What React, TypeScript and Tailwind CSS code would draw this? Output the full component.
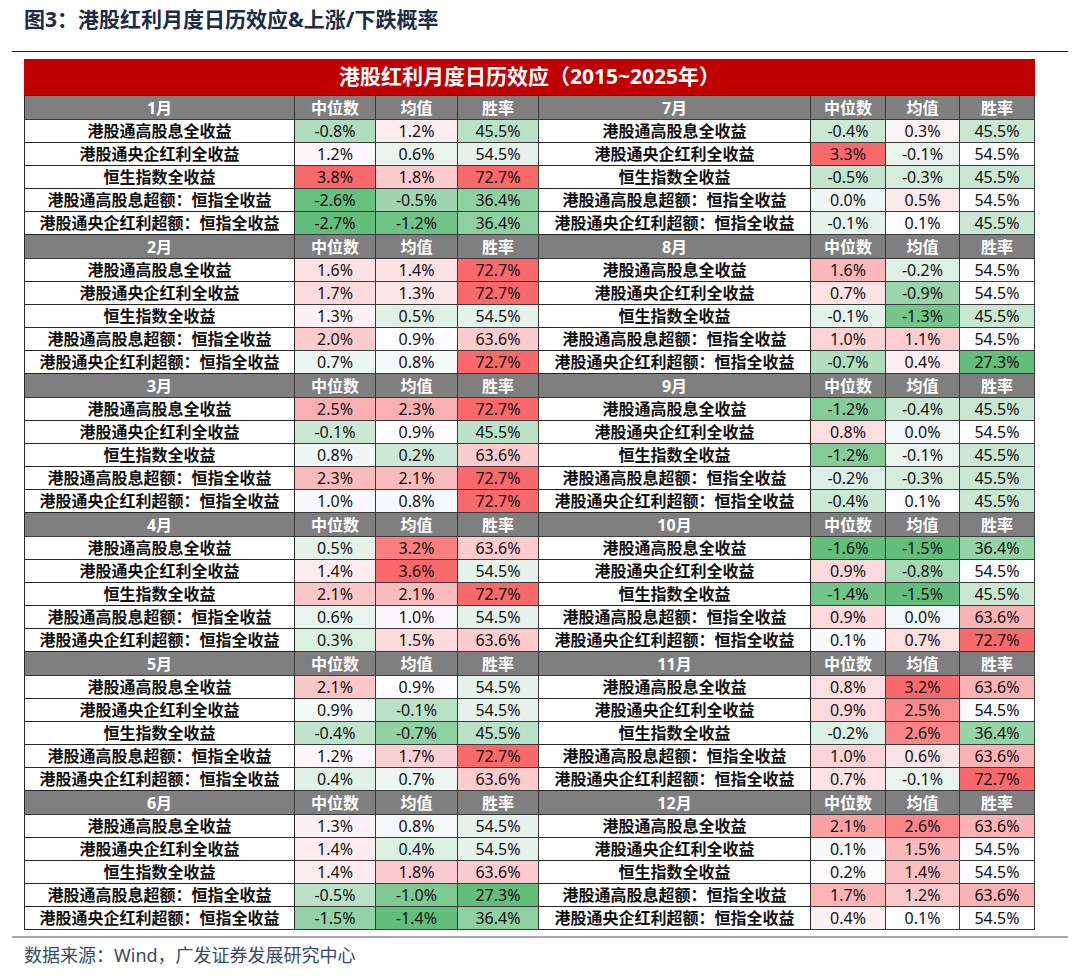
import React from 'react';

type Row = [number, number, number];

interface Block {
  month: string;
  rows: Row[];
}

const LABELS = [
  '港股通高股息全收益',
  '港股通央企红利全收益',
  '恒生指数全收益',
  '港股通高股息超额：恒指全收益',
  '港股通央企红利超额：恒指全收益',
];

const LEFT: Block[] = [
  { month: '1月', rows: [[-0.8, 1.2, 45.5], [1.2, 0.6, 54.5], [3.8, 1.8, 72.7], [-2.6, -0.5, 36.4], [-2.7, -1.2, 36.4]] },
  { month: '2月', rows: [[1.6, 1.4, 72.7], [1.7, 1.3, 72.7], [1.3, 0.5, 54.5], [2.0, 0.9, 63.6], [0.7, 0.8, 72.7]] },
  { month: '3月', rows: [[2.5, 2.3, 72.7], [-0.1, 0.9, 45.5], [0.8, 0.2, 63.6], [2.3, 2.1, 72.7], [1.0, 0.8, 72.7]] },
  { month: '4月', rows: [[0.5, 3.2, 63.6], [1.4, 3.6, 54.5], [2.1, 2.1, 72.7], [0.6, 1.0, 54.5], [0.3, 1.5, 63.6]] },
  { month: '5月', rows: [[2.1, 0.9, 54.5], [0.9, -0.1, 54.5], [-0.4, -0.7, 45.5], [1.2, 1.7, 72.7], [0.4, 0.7, 63.6]] },
  { month: '6月', rows: [[1.3, 0.8, 54.5], [1.4, 0.4, 54.5], [1.4, 1.8, 63.6], [-0.5, -1.0, 27.3], [-1.5, -1.4, 36.4]] },
];

const RIGHT: Block[] = [
  { month: '7月', rows: [[-0.4, 0.3, 45.5], [3.3, -0.1, 54.5], [-0.5, -0.3, 45.5], [0.0, 0.5, 54.5], [-0.1, 0.1, 45.5]] },
  { month: '8月', rows: [[1.6, -0.2, 54.5], [0.7, -0.9, 54.5], [-0.1, -1.3, 45.5], [1.0, 1.1, 54.5], [-0.7, 0.4, 27.3]] },
  { month: '9月', rows: [[-1.2, -0.4, 45.5], [0.8, 0.0, 54.5], [-1.2, -0.1, 45.5], [-0.2, -0.3, 45.5], [-0.4, 0.1, 45.5]] },
  { month: '10月', rows: [[-1.6, -1.5, 36.4], [0.9, -0.8, 54.5], [-1.4, -1.5, 45.5], [0.9, 0.0, 63.6], [0.1, 0.7, 72.7]] },
  { month: '11月', rows: [[0.8, 3.2, 63.6], [0.9, 2.5, 54.5], [-0.2, 2.6, 36.4], [1.0, 0.6, 63.6], [0.7, -0.1, 72.7]] },
  { month: '12月', rows: [[2.1, 2.6, 63.6], [0.1, 1.5, 54.5], [0.2, 1.4, 54.5], [1.7, 1.2, 63.6], [0.4, 0.1, 54.5]] },
];

const HEADS = ['中位数', '均值', '胜率'];

// excel style 3-colour scale: green (min) -> white (median) -> red (max)
const LOW = [0x63, 0xbe, 0x7b];
const MID = [0xfc, 0xfc, 0xff];
const HIGH = [0xf8, 0x69, 0x6b];

function mix(a: number[], b: number[], t: number) {
  const c = a.map((v, i) => Math.round(v + (b[i] - v) * t));
  return `rgb(${c[0]}, ${c[1]}, ${c[2]})`;
}

function makeScale(values: number[]) {
  const s = [...values].sort((a, b) => a - b);
  const min = s[0];
  const max = s[s.length - 1];
  const pos = (s.length - 1) / 2;
  const mid = s[Math.floor(pos)] + (s[Math.ceil(pos)] - s[Math.floor(pos)]) * (pos - Math.floor(pos));
  return (v: number) => {
    if (v >= mid) return mix(MID, HIGH, max === mid ? 0 : (v - mid) / (max - mid));
    return mix(MID, LOW, mid === min ? 0 : (mid - v) / (mid - min));
  };
}

function Side({ blocks, widths }: { blocks: Block[]; widths: string[] }) {
  const scales = [0, 1, 2].map((c) => makeScale(blocks.flatMap((b) => b.rows.map((r) => r[c]))));
  return (
    <div className="flex flex-col">
      {blocks.map((b) => (
        <div key={b.month} className="flex flex-col">
          <div className="flex h-[24px] bg-[#7f7f7f] text-white font-bold text-[16px]">
            <div className={`${widths[0]} flex items-center justify-center border-r border-b border-[#3a3a3a]`}>{b.month}</div>
            {HEADS.map((h, i) => (
              <div key={h} className={`${widths[i + 1]} flex items-center justify-center border-r border-b border-[#3a3a3a]`}>
                {h}
              </div>
            ))}
          </div>
          {b.rows.map((r, ri) => (
            <div key={ri} className="flex h-[23px] text-[16px] text-[#111]">
              <div className={`${widths[0]} flex items-center justify-center bg-white font-bold border-r border-b border-[#262626]`}>
                {LABELS[ri]}
              </div>
              {r.map((v, ci) => (
                <div
                  key={ci}
                  className={`${widths[ci + 1]} flex items-center justify-center border-r border-b border-[#3a3a3a]`}
                  style={{ background: scales[ci](v) }}
                >
                  {v.toFixed(1)}%
                </div>
              ))}
            </div>
          ))}
        </div>
      ))}
    </div>
  );
}

export default function App() {
  return (
    <div className="w-[1080px] h-[976px] bg-white overflow-hidden font-['Noto_Sans','Noto_Sans_CJK_SC',sans-serif]">
      <div className="h-[51px] pl-[24px] pt-[5px] text-[21px] leading-[28px] font-bold text-[#1d2b44]">
        图3：港股红利月度日历效应&amp;上涨/下跌概率
      </div>
      <div className="mx-[12px] h-px bg-[#1f1f1f]" />

      <div className="ml-[24px] mt-[7px] w-[1011px]">
        <div className="h-[36px] bg-[#c00000] flex items-center justify-center text-white font-bold text-[21px]">
          港股红利月度日历效应（2015~2025年）
        </div>
        <div className="flex border-t border-l border-[#2a2a2a]">
          <Side blocks={LEFT} widths={['w-[270px]', 'w-[81px]', 'w-[82px]', 'w-[81px]']} />
          <Side blocks={RIGHT} widths={['w-[272px]', 'w-[75px]', 'w-[74px]', 'w-[75px]']} />
        </div>
      </div>

      <div className="mx-[12px] mt-[6px] h-[2px] bg-[#a8a8a8]" />
      <div className="pl-[24px] mt-[5px] text-[18px] leading-[24px] text-[#3b4a63]">
        数据来源：Wind，广发证券发展研究中心
      </div>
    </div>
  );
}
